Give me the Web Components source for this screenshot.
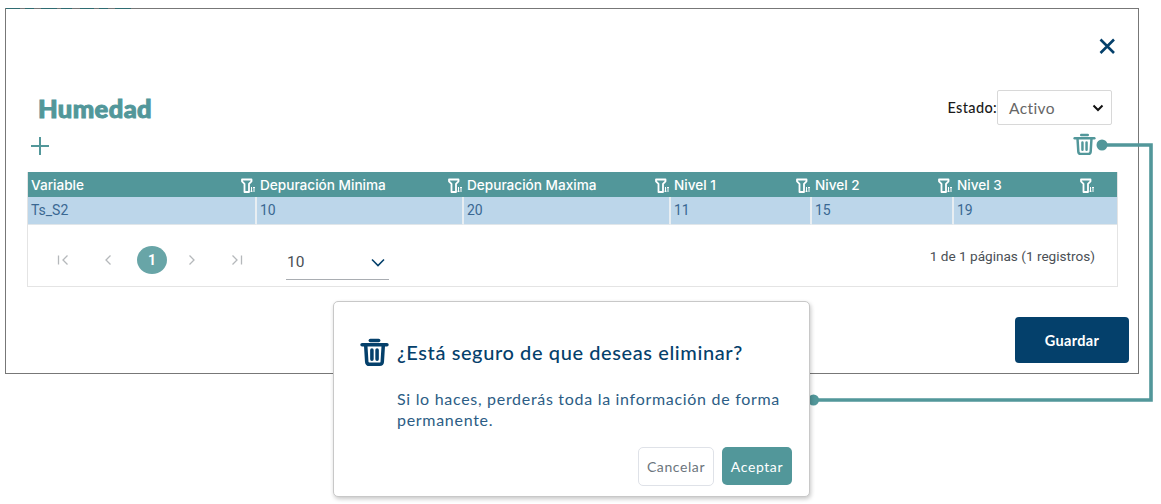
<!DOCTYPE html>
<html lang="es">
<head>
<meta charset="utf-8">
<title>Humedad</title>
<style>
html, body { margin: 0; height: 100%; background: #fff; }
body { width: 1161px; height: 504px; overflow: hidden; position: relative; font-family: "Lato", "Liberation Sans", sans-serif; }
</style>
</head>
<body>
<hum-modal>
  <hum-table></hum-table>
</hum-modal>
<hum-callout></hum-callout>
<hum-confirm></hum-confirm>

<script>
const TEAL = '#52979a';
const NAVY = '#04406b';

const TRASH = `<svg viewBox="0 0 28 28" fill="none" stroke="currentColor" stroke-width="3" stroke-linejoin="round" stroke-linecap="round">
  <path d="M10 2.400h8"/><path d="M2 6.500h24"/><path d="M5.500 7 6.500 23a2.600 2.600 0 0 0 2.600 2.400h9.800A2.600 2.600 0 0 0 21.500 23l1-16"/><path d="M11.500 11.500v9M16.500 11.500v9"/></svg>`;

class HumModal extends HTMLElement {
  constructor() {
    super();
    this.attachShadow({ mode: 'open' });
    this.shadowRoot.innerHTML = `
<style>
:host { display: block; box-sizing: border-box; width: 1134px; height: 366px; margin: 8px 0 0 5px; border: 1px solid #777; background: #fff; padding: 27px 21px 0 21px; color: ${NAVY}; font-family: "Lato", "Liberation Sans", sans-serif; }
.close { display: flex; justify-content: flex-end; height: 22px; }
.close svg { width: 20px; height: 20px; display: block; }
.head { display: flex; justify-content: space-between; align-items: flex-start; margin-top: 33px; height: 43px; }
h1 { margin: 2px 0 0 11px; font: 900 25.500px/30px "Lato", sans-serif; color: ${TEAL}; -webkit-text-stroke: 1px ${TEAL}; letter-spacing: .4px; }
.estado { display: flex; align-items: center; font: 500 14.500px/20px "Lato", sans-serif; color: #1a1a1a; margin: -1px 5px 0 0; letter-spacing: .35px; }
.select { box-sizing: border-box; width: 115px; height: 35px; border: 1px solid #d8d8d8; border-radius: 2px; display: flex; align-items: center; justify-content: space-between; padding: 0 7px 0 11px; color: #666; font: 400 15.500px "Lato", sans-serif; letter-spacing: .4px; }
.select svg { width: 12px; height: 8px; }
.tools { display: flex; justify-content: space-between; align-items: center; height: 26px; padding: 0 21px 0 3px; margin-top: -1px; }
.tools .plus { width: 20px; height: 20px; display: block; }
.tools .trash { width: 23px; height: 23px; display: block; color: ${TEAL}; margin-top: -3px; }
.body { margin-top: 13px; }
.foot { display: flex; justify-content: flex-end; margin-top: 30px; }
.save { width: 114px; height: 46px; background: ${NAVY}; color: #fff; border-radius: 4px; display: flex; align-items: center; justify-content: center; font: 700 14.500px "Lato", sans-serif; letter-spacing: .3px; margin-right: -12px; }
</style>
<div class="close"><svg viewBox="0 0 20 20" fill="none" stroke="${NAVY}" stroke-width="2.600"><path d="M3.500 3.500l13.500 13.500M17 3.500 3.500 17"/></svg></div>
<div class="head">
  <h1>Humedad</h1>
  <div class="estado">Estado:<div class="select">Activo<svg viewBox="0 0 12 8" fill="none" stroke="#111" stroke-width="2"><path d="M1.500 1.500 6 6l4.500-4.500"/></svg></div></div>
</div>
<div class="tools">
  <svg class="plus" viewBox="0 0 20 20" fill="none" stroke="${TEAL}" stroke-width="2"><path d="M10 1v18M1 10h18"/></svg>
  <div class="trash">${TRASH}</div>
</div>
<div class="body"><slot></slot></div>
<div class="foot"><div class="save">Guardar</div></div>`;
  }
}

class HumFilterIcon extends HTMLElement {
  constructor() {
    super();
    this.attachShadow({ mode: 'open' });
    this.shadowRoot.innerHTML = `
<style>:host { display: block; width: 14px; height: 15px; } svg { display: block; }</style>
<svg width="14" height="15" viewBox="0 0 14 15" fill="none" stroke="#fff"><path d="M1 1.500h9.500v1.800L8 5.800v8.200H3.500V5.800L1 3.300z" stroke-width="1.800" stroke-linejoin="round"/><path d="M10.500 9v5M13 9v5M9.500 12.800l1 1.200 1-1.200M12 10.200l1-1.200 1 1.200" stroke-width="1"/></svg>`;
  }
}

class HumTable extends HTMLElement {
  constructor() {
    super();
    this.attachShadow({ mode: 'open' });
    const cols = [
      ['Variable', 'Ts_S2'],
      ['Depuración Minima', '10'],
      ['Depuración Maxima', '20'],
      ['Nivel 1', '11'],
      ['Nivel 2', '15'],
      ['Nivel 3', '19']
    ];
    let head = '', row = '';
    for (const c of cols) {
      head += `<div class="th"><span>${c[0]}</span><hum-filter-icon></hum-filter-icon></div>`;
      row += `<div class="td">${c[1]}</div>`;
    }
    this.shadowRoot.innerHTML = `
<style>
:host { display: block; box-sizing: border-box; width: 1091px; height: 115px; border: 1px solid #e4e4e4; border-top: 0; font-family: Roboto, sans-serif; }
.grid { display: grid; grid-template-columns: 229px 207px 207px 141px 142px 1fr; }
.th { box-sizing: border-box; height: 25px; background: ${TEAL}; color: #fff; font: 500 13.600px/25px Inter, Roboto, sans-serif; padding: 0 2px 0 3px; display: flex; justify-content: space-between; align-items: center; }
.th span { margin-top: 2px; }
.th:nth-child(6) { padding-right: 23px; }
.th hum-filter-icon { margin-top: 2px; }
.td { box-sizing: border-box; height: 28px; background: #bcd6ea; color: #3a6892; font: 400 14px/27px Roboto, sans-serif; padding-left: 3px; border-right: 2px solid #e8eef2; border-bottom: 1px solid #e0e6ea; }
.td:last-child { border-right: 0; }
</style>
<div class="grid">${head}${row}</div>
<hum-pager></hum-pager>`;
  }
}

class HumPager extends HTMLElement {
  constructor() {
    super();
    this.attachShadow({ mode: 'open' });
    this.shadowRoot.innerHTML = `
<style>
:host { display: flex; align-items: flex-start; height: 61px; font-family: Roboto, sans-serif; }
.nav { display: flex; align-items: center; margin: 21px 0 0 13px; height: 28px; }
.nav .btn { width: 44.500px; display: flex; justify-content: center; }
.nav svg { width: 14px; height: 14px; display: block; }
.cur { width: 30px; height: 28px; border-radius: 50%; background: #68a5a7; color: #fff; font: 700 14px/28px Roboto, sans-serif; text-align: center; margin: 0 3px 0 7px; }
.size { box-sizing: border-box; width: 103px; height: 35px; margin: 20px 0 0 27px; border-bottom: 1px solid #a9adb2; display: flex; justify-content: space-between; align-items: center; padding: 0 4px 0 1px; font: 400 15.500px Roboto, sans-serif; color: #4a4f55; }
.size svg { width: 14px; height: 9px; display: block; }
.info { margin: 22px 22px 0 auto; font: 400 13.600px/18px Roboto, sans-serif; color: #4a4f55; }
</style>
<div class="nav">
  <div class="btn"><svg viewBox="0 0 14 14" fill="none" stroke="#b5b8bb" stroke-width="1.300"><path d="M2.500 2.500v9M11.500 2.500 7 7l4.500 4.500"/></svg></div>
  <div class="btn"><svg viewBox="0 0 14 14" fill="none" stroke="#b5b8bb" stroke-width="1.300"><path d="M9.500 2.500 5 7l4.500 4.500"/></svg></div>
  <div class="cur">1</div>
  <div class="btn"><svg viewBox="0 0 14 14" fill="none" stroke="#b5b8bb" stroke-width="1.300"><path d="M4.500 2.500 9 7l-4.500 4.500"/></svg></div>
  <div class="btn"><svg viewBox="0 0 14 14" fill="none" stroke="#b5b8bb" stroke-width="1.300"><path d="M2.500 2.500 7 7l-4.500 4.500M11.500 2.500v9"/></svg></div>
</div>
<div class="size">10<svg viewBox="0 0 14 9" fill="none" stroke="${NAVY}" stroke-width="1.600"><path d="M1 1.500 7 7.500l6-6"/></svg></div>
<div class="info">1 de 1 páginas (1 registros)</div>`;
  }
}

// popup y linea van encima del modal
class HumCallout extends HTMLElement {
  constructor() {
    super();
    this.attachShadow({ mode: 'open' });
    this.shadowRoot.innerHTML = `
<style>:host { position: absolute; left: 0; top: 0; width: 1161px; height: 504px; display: block; pointer-events: none; } svg { display: block; }</style>
<svg width="1161" height="504" fill="none">
  <path d="M6 8.500H134" stroke="#2f6c72" stroke-dasharray="14 5 9 7 16 4 11 8"/>
  <path d="M1101 145H1151V400H813" stroke="${TEAL}" stroke-width="3.600"/>
  <circle cx="1102" cy="145" r="5.500" fill="${TEAL}"/>
  <circle cx="813.500" cy="400" r="5.500" fill="${TEAL}"/>
</svg>`;
  }
}

class HumConfirm extends HTMLElement {
  constructor() {
    super();
    this.attachShadow({ mode: 'open' });
    this.shadowRoot.innerHTML = `
<style>
:host { position: absolute; left: 333px; top: 301px; box-sizing: border-box; width: 477px; height: 196px; background: #fff; border: 1px solid #c8c8c8; border-radius: 5px; box-shadow: 1px 2px 4px rgba(0,0,0,.22); padding: 34px 17px 0 26px; color: ${NAVY}; font-family: "Lato", sans-serif; display: block; }
.title { display: flex; align-items: center; height: 32px; gap: 8px; }
.title .ic { width: 29px; height: 29px; flex: none; }
h2 { margin: 0; font: 500 20px/28px "Lato", sans-serif; letter-spacing: .6px; color: ${NAVY}; }
p { margin: 21px 0 0 37px; font: 400 16px/20.500px "Lato", sans-serif; letter-spacing: .7px; color: #2c5d85; width: 400px; }
.acts { display: flex; justify-content: flex-end; gap: 8px; margin-top: 17px; }
.b { box-sizing: border-box; height: 38px; border-radius: 5px; display: flex; align-items: center; justify-content: center; font: 400 14px "Lato", sans-serif; letter-spacing: .6px; }
.no { width: 76px; height: 39px; border: 1px solid #dfe2e8; color: #6c757d; }
.yes { width: 70px; background: ${TEAL}; color: #fff; }
</style>
<div class="title"><div class="ic">${TRASH.replace('stroke-width="3"', 'stroke-width="3.400"')}</div><h2>¿Está seguro de que deseas eliminar?</h2></div>
<p>Si lo haces, perderás toda la información de forma permanente.</p>
<div class="acts"><div class="b no">Cancelar</div><div class="b yes">Aceptar</div></div>`;
  }
}

customElements.define('hum-filter-icon', HumFilterIcon);
customElements.define('hum-pager', HumPager);
customElements.define('hum-table', HumTable);
customElements.define('hum-modal', HumModal);
customElements.define('hum-callout', HumCallout);
customElements.define('hum-confirm', HumConfirm);
</script>
</body>
</html>
